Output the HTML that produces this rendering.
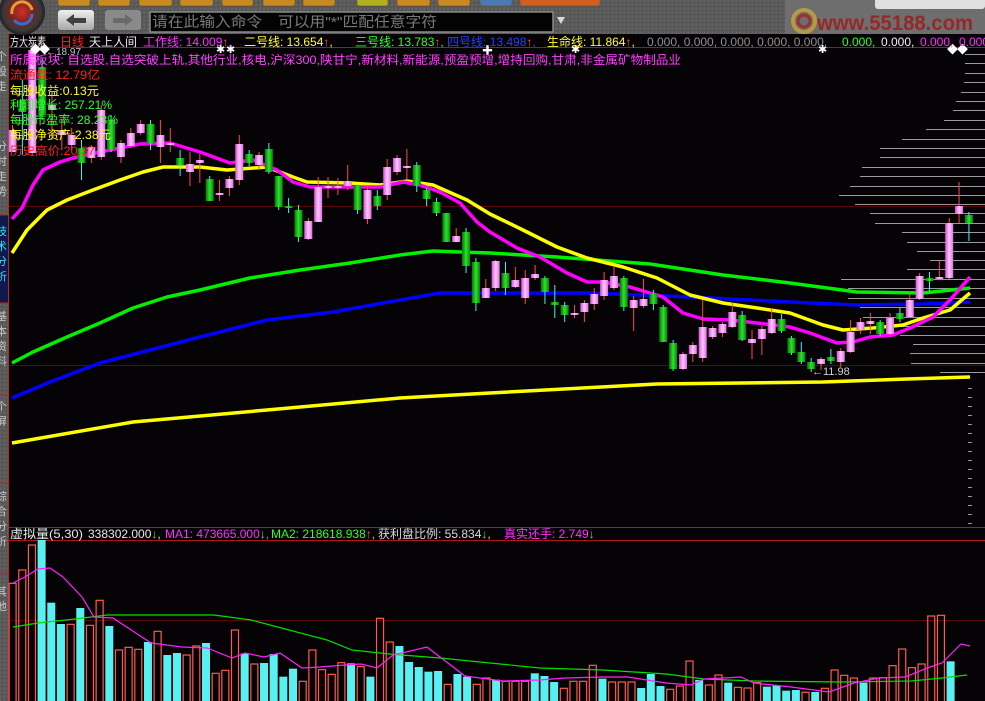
<!DOCTYPE html>
<html><head><meta charset="utf-8"><style>
html,body{margin:0;padding:0;background:#050306;width:985px;height:701px;overflow:hidden}
svg{display:block}
text{font-family:"Liberation Sans","Noto Sans CJK SC",sans-serif}
</style></head><body>
<svg id="s" width="985" height="701" viewBox="0 0 985 701" xmlns="http://www.w3.org/2000/svg">
<defs>
<linearGradient id="pk" x1="0" x2="1"><stop offset="0" stop-color="#d850d8"/><stop offset=".5" stop-color="#ffc8ff"/><stop offset="1" stop-color="#e070e0"/></linearGradient>
<linearGradient id="gn" x1="0" x2="1"><stop offset="0" stop-color="#007a00"/><stop offset=".5" stop-color="#30e030"/><stop offset="1" stop-color="#008800"/></linearGradient>
<linearGradient id="btn" x1="0" y1="0" x2="0" y2="1"><stop offset="0" stop-color="#f0f0f0"/><stop offset="1" stop-color="#a8a8a8"/></linearGradient>
<radialGradient id="lg"><stop offset="0" stop-color="#d03020"/><stop offset=".5" stop-color="#802020"/><stop offset=".8" stop-color="#3a3a3a"/><stop offset="1" stop-color="#202020"/></radialGradient>
<pattern id="noise" width="4" height="4" patternUnits="userSpaceOnUse"><rect width="4" height="4" fill="#5a5a5a"/><rect x="0" y="0" width="1" height="1" fill="#6a6a6a"/><rect x="2" y="2" width="1" height="1" fill="#4a4a4a"/><rect x="3" y="1" width="1" height="1" fill="#686868"/></pattern>
</defs>
<rect width="985" height="701" fill="#050306"/>
<rect x="0" y="0" width="985" height="34" fill="url(#noise)"/>
<rect x="785" y="0" width="200" height="34" fill="#6e6e6e"/>
<g fill="#c88a20" stroke="#6a4a10" stroke-width="0.5">
<rect x="58" y="-4" width="32" height="10" rx="2"/><rect x="98" y="-4" width="32" height="10" rx="2"/><rect x="139" y="-4" width="33" height="10" rx="2"/><rect x="180" y="-4" width="33" height="10" rx="2"/><rect x="222" y="-4" width="31" height="10" rx="2"/><rect x="263" y="-4" width="32" height="10" rx="2"/><rect x="303" y="-4" width="32" height="10" rx="2"/><rect x="357" y="-4" width="31" height="10" rx="2" fill="#b0b020"/><rect x="397" y="-4" width="33" height="10" rx="2"/><rect x="438" y="-4" width="32" height="10" rx="2"/><rect x="480" y="-4" width="32" height="10" rx="2" fill="#4a7ab0"/><rect x="520" y="-4" width="80" height="10" rx="2" fill="#d06020"/>
</g>
<rect x="875" y="-4" width="110" height="13" rx="3" fill="#e0e0e0"/>
<circle cx="22" cy="12" r="23" fill="url(#lg)"/>
<path d="M12 14 A10 10 0 0 1 32 10" fill="none" stroke="#e0a030" stroke-width="3"/>
<path d="M32 14 A10 10 0 0 1 14 20" fill="none" stroke="#3070d0" stroke-width="3"/>
<rect x="58" y="10" width="36" height="20" rx="3" fill="url(#btn)"/>
<path d="M66 20 L74 14 L74 18 L86 18 L86 23 L74 23 L74 26 Z" fill="#404040"/>
<rect x="105" y="10" width="36" height="20" rx="3" fill="#8a8a8a"/>
<path d="M133 20 L125 14 L125 18 L113 18 L113 23 L125 23 L125 26 Z" fill="#6a6a6a"/>
<rect x="150" y="12" width="403" height="20" fill="#030303" stroke="#8a8a8a" stroke-width="1.5"/>
<text x="152" y="27" font-size="14.5" fill="#7a7a7a" textLength="285" lengthAdjust="spacingAndGlyphs">请在此输入命令　可以用"*"匹配任意字符</text>
<path d="M557 17 L565 17 L561 24 Z" fill="#d8d8d8"/>
<circle cx="804" cy="21" r="11" fill="none" stroke="#b89a40" stroke-width="4"/>
<circle cx="804" cy="21" r="6" fill="none" stroke="#a03030" stroke-width="3"/>
<text x="817" y="30" font-size="21" font-weight="bold" fill="#962828" textLength="156" lengthAdjust="spacingAndGlyphs">www.55188.com</text>
<rect x="0" y="34" width="8" height="667" fill="url(#noise)"/>
<rect x="0" y="215" width="8" height="88" fill="#101850"/>
<line x1="8.5" y1="34" x2="8.5" y2="701" stroke="#c02020" stroke-width="1"/>
<g stroke="#c02020" stroke-width="1"><line x1="0" y1="215" x2="8" y2="215"/><line x1="0" y1="303" x2="8" y2="303"/><line x1="0" y1="395" x2="8" y2="395"/><line x1="0" y1="483" x2="8" y2="483"/><line x1="0" y1="573" x2="8" y2="573"/></g>
<g font-size="11" fill="#c8c8c8">
<text x="-4" y="60">个</text><text x="-4" y="75">股</text><text x="-4" y="90">走</text><text x="-4" y="150">分</text><text x="-4" y="165">时</text><text x="-4" y="180">走</text><text x="-4" y="195">势</text>
<text x="-4" y="235" fill="#40e0f0">技</text><text x="-4" y="250" fill="#40e0f0">术</text><text x="-4" y="265" fill="#40e0f0">分</text><text x="-4" y="280" fill="#40e0f0">析</text>
<text x="-4" y="320">基</text><text x="-4" y="335">本</text><text x="-4" y="350">资</text><text x="-4" y="365">料</text>
<text x="-4" y="410">个</text><text x="-4" y="425">屏</text>
<text x="-4" y="500">综</text><text x="-4" y="515">合</text><text x="-4" y="530">分</text><text x="-4" y="545">析</text>
<text x="-4" y="595">其</text><text x="-4" y="610">他</text>
</g>
<line x1="9" y1="47.5" x2="985" y2="47.5" stroke="#a01818" stroke-width="1"/>
<g stroke="#580a0a" stroke-width="1"><line x1="9" y1="206.5" x2="985" y2="206.5"/><line x1="9" y1="365.5" x2="985" y2="365.5"/><line x1="9" y1="620.5" x2="985" y2="620.5"/></g>
<g stroke="#b01818" stroke-width="1"><line x1="9" y1="527.5" x2="985" y2="527.5"/><line x1="9" y1="540.5" x2="985" y2="540.5"/></g>
<g id="dist" stroke="#9a9a9a" stroke-width="1"></g>
<g id="ticks" stroke="#9a9a9a" stroke-width="1"></g>
<g fill="none" stroke-width="3.5" stroke-linejoin="round">
<polyline stroke="#ffff00" points="12,443 133,422 267,410 400,398 490,393 657,384 823,382 907,379 970,377"/>
<polyline stroke="#0000ff" points="12,398 50,382 100,363 150,350 200,337 267,320 333,312 400,300 440,293 490,293 590,293 690,297 790,302 857,305 923,304 970,302"/>
<polyline stroke="#00f000" points="12,363 33,352 67,337 100,323 133,308 167,297 200,290 250,278 300,270 350,263 400,255 433,251 460,252 490,253 557,257 650,264 723,275 790,283 857,292 923,293 970,288"/>
<polyline stroke="#ffff00" points="12,253 27,230 47,210 67,200 93,190 120,180 143,172 163,167 200,167 227,170 267,167 293,177 307,182 350,183 380,185 407,181 433,185 467,200 490,214 523,230 557,247 587,258 623,267 657,278 690,295 723,303 757,308 790,313 823,325 843,330 873,328 903,325 923,318 950,310 970,293"/>
<polyline stroke="#ff00ff" points="12,219 22,208 33,185 43,170 60,162 73,158 100,152 140,144 170,143 200,152 230,163 253,160 277,170 293,182 310,187 353,187 380,187 403,182 420,185 440,192 460,203 477,222 490,232 517,248 540,257 567,273 587,282 603,282 630,287 663,297 683,313 703,319 730,320 757,323 790,327 810,333 837,343 853,342 870,337 893,335 910,328 933,317 950,300 970,277"/>
</g>
<g id="cdl"></g>
<g id="vol"></g>
<g fill="none" stroke-width="1.2">
<polyline stroke="#00e000" points="13,627 38,623 75,619 107,615 163,615 214,615 251,620 289,630 327,640 352,650 389,654 440,658 490,663 540,668 603,670 666,674 704,679 754,681 842,682 911,681 942,678 967,675"/>
<polyline stroke="#ff20ff" points="13,583 25,577 38,569 50,568 63,577 82,597 94,617 113,618 151,643 182,647 207,648 232,658 245,653 264,657 280,653 302,668 320,667 345,665 361,664 377,668 393,655 427,647 440,657 465,676 503,681 540,680 565,678 603,677 628,677 666,683 691,685 704,679 741,677 754,683 791,687 829,692 854,683 879,678 905,677 930,667 942,663 961,644 970,646"/>
</g>
<g fill="#ffffff" font-size="11">
<text x="30" y="53">◆</text><text x="39" y="53">◆</text><text x="216" y="53">✱</text><text x="226" y="53">✱</text><text x="482" y="54">✚</text><text x="571" y="53">✱</text><text x="818" y="53">✱</text><text x="947" y="53">◆</text><text x="957" y="53">◆</text>
</g>
<text x="46" y="55" font-size="10" fill="#c0c0c0">←18.97</text>
<text x="812" y="375" font-size="11" fill="#d0d0d0">←11.98</text>
<g font-size="12">
<text x="10" y="46" fill="#e8e8e8" textLength="36" lengthAdjust="spacingAndGlyphs">方大炭素</text>
<text x="60" y="46" fill="#ff2020">日线</text>
<text x="89" y="46" fill="#e8e8e8">天上人间</text>
<text x="143" y="46" fill="#ff30ff">工作线: 14.009<tspan fill="#ff5050" font-weight="bold">↑</tspan>,</text>
<text x="244" y="46" fill="#ffff30">二号线: 13.654<tspan fill="#ff5050" font-weight="bold">↑</tspan>,</text>
<text x="355" y="46" fill="#30ff30">三号线: 13.783<tspan fill="#ff5050" font-weight="bold">↑</tspan>,</text>
<text x="447" y="46" fill="#2040ff">四号线: 13.498<tspan fill="#ff5050" font-weight="bold">↑</tspan>,</text>
<text x="547" y="46" fill="#ffff30">生命线: 11.864<tspan fill="#ff5050" font-weight="bold">↑</tspan>,</text>
<text x="647" y="46" fill="#909090">0.000, 0.000, 0.000, 0.000, 0.000,</text>
<text x="842" y="46" fill="#30ff30">0.000,</text>
<text x="881" y="46" fill="#f0f0f0">0.000,</text>
<text x="920" y="46" fill="#ff30ff">0.000,</text>
<text x="959" y="46" fill="#ff30ff">0.000</text>
<text x="10" y="64" fill="#ff40ff" textLength="671" lengthAdjust="spacingAndGlyphs">所属板块: 自选股,自选突破上轨,其他行业,核电,沪深300,陕甘宁,新材料,新能源,预盈预增,增持回购,甘肃,非金属矿物制品业</text>
<text x="10" y="79" fill="#ff2020" textLength="90" lengthAdjust="spacingAndGlyphs">流通盘: 12.79亿</text>
<text x="10" y="95" fill="#ffff20" textLength="89" lengthAdjust="spacingAndGlyphs">每股收益:0.13元</text>
<text x="10" y="109" fill="#30ff30" textLength="102" lengthAdjust="spacingAndGlyphs">利润增长: 257.21%</text>
<text x="10" y="124" fill="#30ff30" textLength="108" lengthAdjust="spacingAndGlyphs">每股市盈率: 28.23%</text>
<text x="10" y="139" fill="#ffff20" textLength="101" lengthAdjust="spacingAndGlyphs">每股净资产:2.38元</text>
<text x="10" y="155" fill="#ff2020" textLength="85" lengthAdjust="spacingAndGlyphs">历史高价:20.37</text>
<text x="10" y="538" fill="#e8e8e8" textLength="73" lengthAdjust="spacingAndGlyphs">虚拟量(5,30)</text>
<text x="88" y="538" fill="#e8e8e8">338302.000<tspan fill="#30ff30" font-weight="bold">↓</tspan>,</text>
<text x="165" y="538" fill="#ff30ff">MA1: 473665.000<tspan fill="#30ff30" font-weight="bold">↓</tspan>,</text>
<text x="271" y="538" fill="#30ff30">MA2: 218618.938<tspan fill="#ff5050" font-weight="bold">↑</tspan>,</text>
<text x="378" y="538" fill="#d8d8d8">获利盘比例: 55.834<tspan fill="#30ff30" font-weight="bold">↓</tspan>,</text>
<text x="504" y="538" fill="#ff30ff">真实还手: 2.749<tspan fill="#30ff30" font-weight="bold">↓</tspan></text>
</g>
</svg>
<script>
var NS="http://www.w3.org/2000/svg";
function el(p,t,a){var e=document.createElementNS(NS,t);for(var k in a)e.setAttribute(k,a[k]);p.appendChild(e);return e;}
var C=[[0,'p',130,152,125,152],[1,'g',100,112,80,155],[2,'p',50,153,45,155],[3,'g',67,115,60,120],[4,'p',105,110,95,140],[5,'p',130,135,120,150],[6,'p',135,145,128,150],
[7,'g',148,163,140,180],[8,'p',147,158,145,163],[9,'p',110,157,105,160],[10,'g',120,150,115,152],[11,'p',143,157,140,163],[12,'p',133,146,128,148],[13,'p',124,133,120,135],[14,'g',124,144,120,150],[15,'p',135,147,120,163],[16,'d',143,144,128,152],[17,'g',158,165,150,176],[18,'p',164,172,152,186],[19,'p',160,163,154,183],[20,'g',179,201,176,201],[21,'d',193,194,180,201],[22,'p',179,188,176,196],[23,'p',144,180,135,185],[24,'g',154,163,150,166],[25,'p',155,165,152,170],[26,'g',149,172,143,174],[27,'g',176,207,176,210],[28,'g',206,208,198,213],[29,'g',210,237,205,242],[30,'p',221,239,218,240],[31,'p',187,222,177,222],[32,'d',186,187,177,198],[33,'d',186,187,178,195],[34,'p',181,186,165,190],[35,'g',186,210,184,214],[36,'p',190,219,186,224],[37,'g',196,206,190,210],[38,'p',167,195,159,200],[39,'p',158,172,155,175],[40,'d',166,167,149,180],[41,'g',165,186,162,192],[42,'g',190,199,188,206],[43,'g',202,213,198,216],[44,'g',213,242,213,242],[45,'p',236,242,228,242],[46,'g',232,266,228,273],[47,'g',262,303,258,311],[48,'p',288,298,279,298],
[49,'p',261,288,260,291],[50,'g',273,288,262,295],[51,'p',280,287,267,288],[52,'p',278,298,270,304],[53,'p',274,278,265,280],[54,'g',278,292,276,304],[55,'g',302,305,285,318],[56,'g',305,315,302,322],[57,'p',313,315,305,318],[58,'p',303,312,300,322],[59,'p',294,304,288,310],[60,'p',280,296,272,300],[61,'p',276,288,266,290],[62,'g',278,307,276,311],[63,'p',300,308,296,331],[64,'p',299,306,279,308],[65,'g',294,304,290,310],[66,'g',307,342,305,342],[67,'g',343,369,340,371],[68,'p',354,369,352,370],[69,'p',345,354,342,362],[70,'p',327,358,300,362],[71,'p',328,337,326,339],[72,'p',324,333,322,337],[73,'p',312,327,303,328],[74,'g',315,340,311,341],[75,'p',339,343,330,359],[76,'p',329,339,326,355],[77,'p',319,333,308,334],[78,'g',319,331,314,333],[79,'g',338,353,336,355],[80,'g',352,362,342,364],[81,'g',362,369,358,372],[82,'p',359,364,357,370],[83,'g',357,361,349,364],[84,'p',351,362,348,367],[85,'p',332,352,320,353],[86,'p',322,330,318,334],[87,'p',321,324,313,334],[88,'g',322,334,320,336],[89,'p',318,334,313,336],[90,'g',313,319,308,322],[91,'p',300,317,294,318],[92,'p',276,299,273,300],[93,'g',278,281,272,292],[94,'p',277,279,261,280],[95,'p',223,278,218,279],[96,'p',206,214,182,223],[97,'g',215,223,212,241]];
var g=document.getElementById('cdl');
C.forEach(function(c){var x=12.5+c[0]*9.86;var up=c[1]!='g';
el(g,'line',{x1:x,x2:x,y1:c[4],y2:c[5],stroke:up?'#ff4848':'#40f0f0','stroke-width':1});
if(c[1]=='d'){el(g,'rect',{x:x-4,y:c[2],width:8,height:2,fill:'url(#pk)'});}
else el(g,'rect',{x:x-4,y:c[2],width:8,height:Math.max(2,c[3]-c[2]),fill:up?'url(#pk)':'url(#gn)'});});
var V="r160 r120 r45 c30 c218 c282 r283 c234 r286 r211 c288 r360 r352 r358 c336 r304 c375 c369 r375 r348 c339 r430 r421 r300 c370 r402 c399 c372 c440 c416 r454 r360 r419 r433 r398 c400 r410 c440 r265 r336 c348 c396 c411 c425 c423 r463 c432 c440 r463 r444 c449 r454 r454 r454 c430 c438 c456 r475 r454 r454 r406 c446 r456 r456 r456 c474 c432 c468 r478 r468 r393 c450 r465 r435 c458 r472 r474 r458 c470 c466 c482 c480 r487 c486 r475 r420 r436 r444 c458 r444 r443 r407 r357 r413 r402 r258 r256 c394".split(' ');
var vg=document.getElementById('vol');
V.forEach(function(s,i){var x=12.6+i*9.67;var t=530+parseInt(s.slice(1))/3;
if(s[0]=='r')el(vg,'rect',{x:x-3.5,y:t,width:7,height:701-t+2,fill:'none',stroke:'#ff5a4a','stroke-width':1.2});
else el(vg,'rect',{x:x-4,y:t,width:8,height:701-t,fill:'#58f0f0'});});
var D=[[54,965],[63,965],[73,965],[82,964],[92,961],[101,956],[110,953],[120,944],[129,926],[139,902],[148,880],[157,880],[167,862],[176,860],[186,850],[195,839],[204,855],[213,870],[223,875],[232,902],[242,907],[251,917],[260,930],[269,907],[279,841],[288,848],[298,848],[307,860],[317,863],[326,886],[335,900],[344,913],[353,910],[363,911],[372,940]];
var dg=document.getElementById('dist');
D.forEach(function(d){el(dg,'line',{x1:d[1],x2:985,y1:d[0]+.5,y2:d[0]+.5});});
var tg=document.getElementById('ticks');
for(var y=388;y<525;y+=9)el(tg,'line',{x1:968,x2:972,y1:y+.5,y2:y+.5});
</script>
</body></html>
